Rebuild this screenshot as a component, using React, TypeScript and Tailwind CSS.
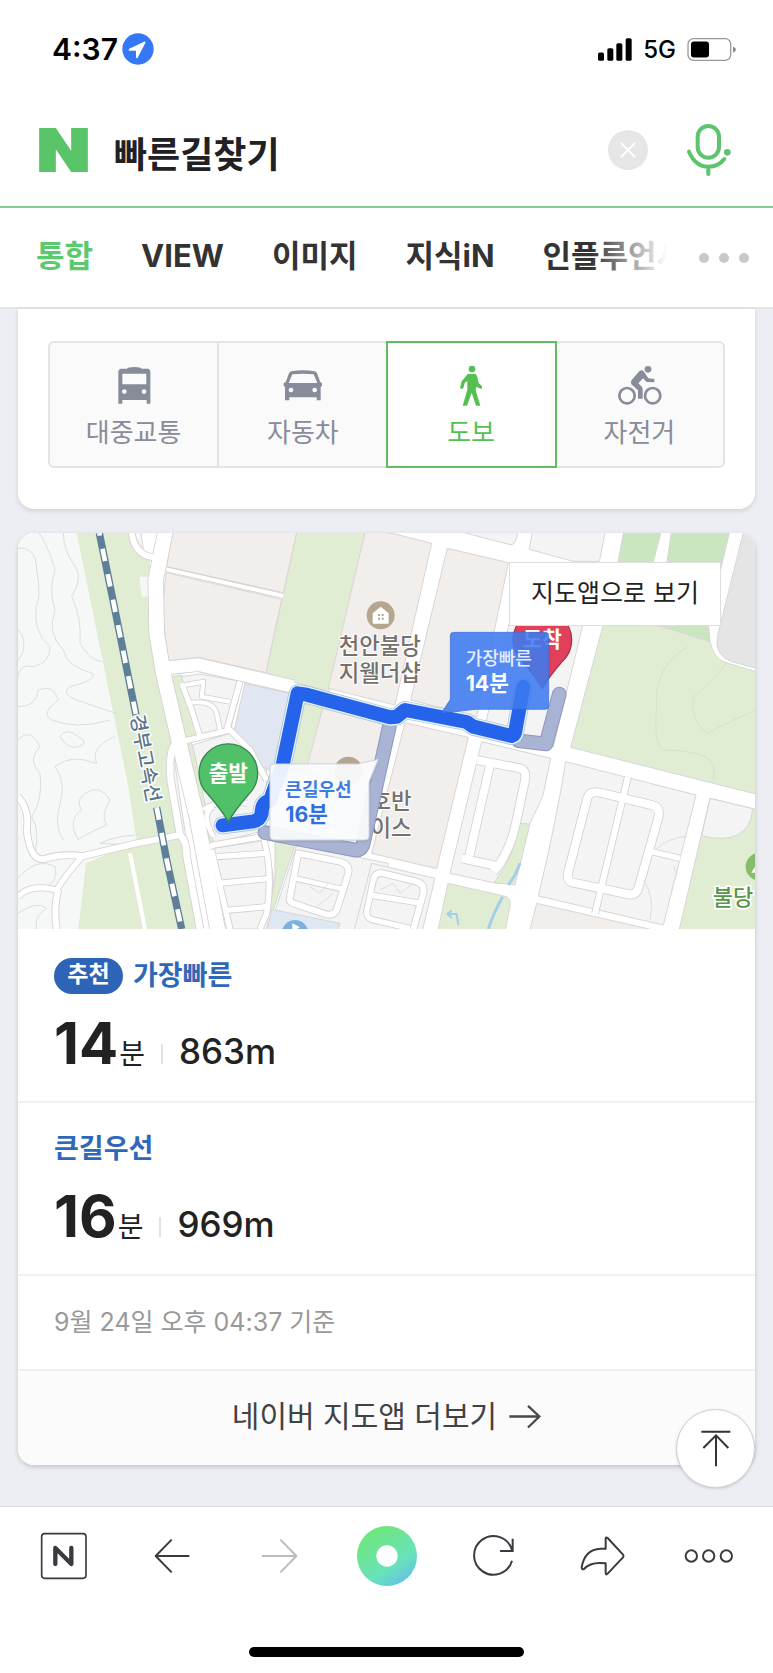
import React from "react";

const rail = "M298,39 L345,270 L408,585";
const railSouth = "M470,862 L500,1020 L545,1227";

const contours = [
  "M54,85 Q110,80 110,150 Q125,230 108,260 Q100,340 150,380 Q150,430 100,440 Q60,430 54,470",
  "M118,39 Q150,90 165,150 Q145,210 165,270 Q140,340 190,390 Q200,440 278,460 Q290,480 210,500 Q180,520 230,540 L348,580",
  "M190,39 Q190,90 225,140 Q250,170 215,230 Q245,290 240,370 Q270,420 305,425",
  "M54,560 Q110,560 115,510 Q160,490 175,540 Q120,580 155,600 Q230,630 330,600",
  "M180,650 Q200,620 235,650 Q270,670 235,680 Q205,690 180,650",
  "M54,660 Q90,620 120,680 Q80,720 120,760 Q130,840 95,890 Q120,930 105,1000",
  "M345,650 Q270,680 290,730 Q210,700 165,740 Q200,790 180,850 Q160,920 190,960",
  "M255,820 Q300,790 330,840 Q300,890 320,915 Q240,950 235,960 Q200,900 245,870 Q225,840 255,820",
  "M405,945 Q340,950 300,970 L395,975",
  "M54,330 Q80,350 68,400 L54,420",
  "M54,1075 Q110,1010 165,1040 Q180,1090 120,1110",
  "M54,1180 Q110,1140 140,1165 Q100,1190 110,1227",
  "M2065,380 Q1960,440 1970,560 Q1960,680 1990,690 Q2090,690 2130,720 Q2150,740 2140,780",
  "M2180,430 Q2120,500 2080,530 Q2070,600 2120,640 Q2180,610 2265,570",
];

const streets = [
  { d: "M395,39 Q405,105 460,112", w: 18 },
  { d: "M500,148 L850,228", w: 12 },
  { d: "M54,1130 Q90,1090 170,1110 Q200,1060 245,1012", w: 16 },
  { d: "M170,1227 Q160,1160 175,1110", w: 18 },
  { d: "M54,830 Q90,870 80,930 Q90,1020 130,1018 Q180,1000 250,1008 L400,972 L540,945", w: 18 },
  { d: "M525,670 Q505,700 512,780 L540,945 Q560,960 560,1010 L600,1227", w: 20 },
  { d: "M545,490 L575,570 L600,650", w: 15 },
  { d: "M555,495 L610,485 L605,530 L690,545", w: 12 },
  { d: "M570,548 Q640,540 650,580 L660,630", w: 12 },
  { d: "M720,485 L680,630", w: 16 },
  { d: "M545,665 L690,630 L750,690 L800,780", w: 16 },
  { d: "M610,870 Q640,840 740,850 M640,950 Q600,880 640,860", w: 14 },
  { d: "M610,990 L640,975 L790,950 Q820,1060 800,1180 L780,1227", w: 16 },
  { d: "M650,1010 L800,1000 M655,1090 L812,1075 M670,1172 L800,1160", w: 16 },
  { d: "M635,990 L690,1227", w: 16 },
  { d: "M895,1000 L1020,1025 Q1050,1035 1045,1060 L1010,1170 Q1000,1190 975,1182 L880,1150 Q865,1145 870,1130 Z", w: 18 },
  { d: "M885,1075 L1030,1108", w: 14 },
  { d: "M1120,1080 Q1125,1055 1150,1060 L1250,1085 Q1275,1092 1270,1120 L1240,1227", w: 18 },
  { d: "M1120,1080 L1100,1175 Q1100,1195 1120,1200 L1230,1225 M1110,1125 L1265,1150", w: 16 },
  { d: "M1430,720 L1560,745 Q1580,750 1575,780 L1550,900 Q1530,1000 1480,1055", w: 24 },
  { d: "M1470,735 L1405,1020 M1385,1015 L1500,1040", w: 24 },
  { d: "M1762,835 Q1768,812 1800,818 L1955,855 Q1982,862 1976,890 L1915,1105 Q1908,1128 1882,1122 L1720,1088 Q1698,1082 1705,1055 Z", w: 24 },
  { d: "M1884,770 L1785,1180", w: 18 },
  { d: "M1955,995 L2040,1015", w: 16 },
];

const stone = "fill-[#f1eeec]";
const pale = "fill-[#f4f4f4]";
const grass = "fill-[#e1edd2]";
const deepGrass = "fill-[#cae6c0]";

const blocks: { d: string; c: string }[] = [
  { d: "M40,20 H420 L600,1240 H40 Z", c: "fill-[#f6f7f7]" },
  { d: "M518,30 H892 L850,218 L500,140 Z", c: stone },
  { d: "M498,158 L845,238 L798,458 L595,412 L505,422 L487,280 Z", c: stone },
  { d: "M892,30 H1097 L985,520 L880,485 L798,458 Z", c: grass },
  { d: "M1097,30 L1185,42 L1295,70 L1185,555 L985,505 Z", c: stone },
  { d: "M1342,85 L1525,128 L1430,590 L1232,540 Z", c: stone },
  { d: "M1362,30 L1530,74 Q1549,78 1554,30 Z", c: pale },
  { d: "M1598,30 L1588,88 L1720,124 L1798,124 L1817,30 Z", c: pale },
  { d: "M1530,300 H1752 L1660,680 L1450,640 Z", c: pale },
  { d: "M1872,30 H1985 L1940,200 H1840 Z", c: deepGrass },
  { d: "M2015,30 H2190 L2150,200 H1990 Z", c: deepGrass },
  { d: "M1815,300 L1985,320 L2130,365 Q2140,420 2185,430 L2275,457 V824 L1712,682 L1800,350 Z", c: grass },
  { d: "M1960,310 H2125 L2130,364 Z", c: deepGrass },
  { d: "M2232,30 H2280 V448 L2195,425 Q2142,405 2152,350 Z", c: "fill-[#e5e5e5]" },
  { d: "M515,470 L545,465 L600,645 L553,655 Z", c: grass },
  { d: "M550,680 L575,670 L630,850 L640,970 L610,970 Z", c: grass },
  { d: "M545,470 L600,462 L728,485 L690,635 L600,655 Z", c: pale },
  { d: "M578,675 L690,640 L800,750 L800,930 L640,970 Z", c: pale },
  { d: "M735,490 L868,520 L825,760 L780,735 L700,640 Z", c: "fill-[#e0e7f2]" },
  { d: "M640,985 L800,960 L822,1080 L800,1227 H690 Z", c: pale },
  { d: "M825,965 L885,975 L820,1170 L805,1180 L825,1080 Z", c: grass },
  { d: "M905,550 L968,560 L925,760 H865 Z", c: grass },
  { d: "M968,565 L1148,612 L1090,950 L925,900 L925,725 Z", c: stone },
  { d: "M1215,608 L1405,652 L1310,1046 L1115,1000 Z", c: stone },
  { d: "M890,975 L1165,1030 L1120,1240 H990 L825,1175 Z", c: pale },
  { d: "M815,1168 L1020,1210 L1010,1240 H800 Z", c: "fill-[#dde8f3]" },
  { d: "M1115,1030 L1305,1075 L1265,1240 H1060 Z", c: pale },
  { d: "M1445,665 L1652,715 L1628,830 L1590,910 L1490,1090 L1350,1060 Z", c: pale },
  { d: "M1554,910 L1590,912 L1545,1095 L1482,1088 Q1550,1000 1554,910 Z", c: grass },
  { d: "M1344,1090 L1520,1130 Q1534,1140 1530,1160 L1514,1240 H1312 Z", c: grass },
  { d: "M1697,725 L2088,825 L1990,1215 L1615,1128 Q1670,900 1697,725 Z", c: pale },
  { d: "M1610,1150 L1960,1230 H1590 Z", c: stone },
  { d: "M2130,835 L2275,870 V1240 H2035 Z", c: grass },
  { d: "M2130,835 L2258,866 Q2250,980 2105,948 Z", c: pale },
];

const fastRoute =
  "M668,916 L760,904 Q780,900 785,880 Q785,845 810,842 L848,735 L893,520 L920,524 L1170,592 L1190,590 L1215,570 L1400,606 L1420,620 L1535,648 Q1543,646 1545,638 L1570,500";

function Pin({ x, y, label, tone }: { x: number; y: number; label: string; tone: string }) {
  return (
    <g transform={`translate(${x} ${y})`}>
      <path className={tone} strokeWidth="4" d="M0,145 Q-20,110 -62,62 A88,88 0 1 1 62,62 Q20,110 0,145 Z" />
      <text className="fill-white font-bold" fontSize="64" textAnchor="middle" y="22">{label}</text>
    </g>
  );
}

function RouteMap() {
  return (
    <svg viewBox="54 39 2211 1188" className="block h-auto w-full bg-white" role="img" aria-label="경로 지도">
      <g className="stroke-[#d8d6d5]" strokeWidth="3">
        {blocks.map((b) => <path key={b.d} d={b.d} className={b.c} />)}
      </g>
      <path className={grass} d="M230,39 H400 L450,118 L460,380 L485,500 L525,660 L510,700 L545,945 L600,1227 H235 L258,1030 L410,965 L385,800 Z" />
      <g fill="none" className="stroke-[#dddddd]" strokeWidth="3">
        {contours.slice(0, 12).map((d) => <path key={d} d={d} />)}
      </g>
      <g fill="none" className="stroke-[#d6e0c8]" strokeWidth="3">
        {contours.slice(12).map((d) => <path key={d} d={d} />)}
      </g>
      <path className="fill-[#f7f7f7]" d="M418,170 H445 V230 H425 Z" />
      <g fill="none" strokeLinejoin="round">
        {streets.map((s) => <path key={s.d} d={s.d} className="stroke-[#d3d1d0]" strokeWidth={s.w + 5} />)}
        <path className="stroke-[#d3d1d0]" strokeWidth="49" d="M497,30 L467,180 L470,340 L490,460 L545,700 L590,890 L655,1240" />
        <path className="stroke-[#d3d1d0]" strokeWidth="43" d="M497,445 L595,434 L880,500" />
        {streets.map((s) => <path key={s.d} d={s.d} className="stroke-white" strokeWidth={s.w} />)}
        <path className="stroke-white" strokeWidth="44" d="M497,30 L467,180 L470,340 L490,460 L545,700 L590,890 L655,1240" />
        <path className="stroke-white" strokeWidth="38" d="M485,445 L595,434 L880,500" />
        <path className="stroke-white" strokeWidth="12" d="M390,1000 L435,1227" />
      </g>
      <path className="fill-none stroke-[#dedede]" strokeWidth="3" d="M1965,990 Q2010,950 2060,950 M2020,1040 L2030,1060 L2015,1110 M1930,1080 Q1965,1130 1950,1200 M930,1100 L960,1120 L985,1090 M950,1160 L1000,1120 M1140,1110 L1180,1090 L1200,1120 L1240,1090 M650,700 L720,740" />
      <g fill="none" className="stroke-[#a5cdec]" strokeWidth="9">
        <path d="M1560,1030 Q1545,1070 1525,1095 M1508,1130 Q1480,1180 1465,1227" />
        <path strokeWidth="6" d="M1342,1182 L1370,1182 L1375,1215 M1355,1172 L1342,1182 L1356,1194" />
      </g>
      <g fill="none">
        {[rail, railSouth].map((d) => <path key={d} d={d} className="stroke-[#5d7f99]" strokeWidth="22" />)}
        <path d={rail} className="stroke-white" strokeWidth="14" strokeDasharray="38 40" strokeDashoffset="-48" />
        <path d={railSouth} className="stroke-white" strokeWidth="14" strokeDasharray="38 40" strokeDashoffset="-78" />
      </g>
      <text transform="translate(391 588) rotate(79)" fontSize="58" className="fill-[#5b738e] stroke-white font-medium" strokeWidth="8" paintOrder="stroke">경부고속선</text>

      <circle cx="1142" cy="286" r="42" className="fill-[#b5a78f]" />
      <path className="fill-white" d="M1142,260 L1166,280 V308 Q1166,311 1163,311 H1121 Q1118,311 1118,308 V280 Z" />
      <path className="fill-[#b5a78f]" d="M1134,282 h6 v6 h-6 z M1145,282 h6 v6 h-6 z M1134,293 h6 v6 h-6 z M1145,293 h6 v6 h-6 z" />
      <circle cx="1045" cy="752" r="42" className="fill-[#b5a78f]" />
      <g className="fill-[#76706c] stroke-white font-medium" fontSize="67" strokeWidth="6" paintOrder="stroke">
        <text x="1016" y="402">천안불당</text>
        <text x="1016" y="482">지웰더샵</text>
        <text x="1235" y="868" textAnchor="end">호반</text>
        <text x="1235" y="948" textAnchor="end">이스</text>
      </g>
      <circle cx="885" cy="1240" r="40" className="fill-[#7fafdf]" />
      <path className="fill-white" d="M877,1210 L900,1222 L877,1234 Z" />
      <circle cx="2279" cy="1040" r="42" className="fill-[#86bd6c]" />
      <path className="fill-white" d="M2279,1018 L2254,1058 H2290 Z" />
      <text x="2138" y="1156" fontSize="66" className="fill-[#5a9648] stroke-white font-medium" strokeWidth="10" paintOrder="stroke">불당</text>

      <g fill="none" strokeLinecap="round" strokeLinejoin="round">
        <g className="stroke-[#8d97bd]" strokeWidth="44">
          <path d="M795,938 L1065,990 Q1085,992 1090,970 L1168,620" />
          <path d="M1555,662 L1638,672 L1678,522" />
        </g>
        <g className="stroke-[#a9b3d4]" strokeWidth="38">
          <path d="M795,938 L1065,990 Q1085,992 1090,970 L1168,620" />
          <path d="M1555,662 L1638,672 L1678,522" />
        </g>
        <path className="stroke-[#a8bcd2]" strokeWidth="54" d={fastRoute} />
        <path className="stroke-[#e3f3ff]" strokeWidth="50" d={fastRoute} />
        <path className="stroke-[#2563ea]" strokeWidth="42" d={fastRoute} />
      </g>
      <Pin x={685} y={760} label="출발" tone="fill-[#50c168] stroke-[#37894f]" />
      <Pin x={1627} y={360} label="도착" tone="fill-[#e0405a] stroke-[#a8324a]" />

      <path className="fill-[#3c7af0] stroke-[#3468d8]" fillOpacity="0.88" strokeWidth="2" d="M1361,337 H1636 Q1646,337 1646,347 V558 Q1646,568 1636,568 H1425 L1324,580 L1351,538 V347 Q1351,337 1361,337 Z" />
      <text x="1397" y="436" fontSize="54" className="fill-[#e6efff] font-medium">가장빠른</text>
      <text x="1397" y="514" fontSize="64" className="fill-white font-bold">14분</text>

      <path className="fill-[#fcfdff] stroke-[#d0d5e0] drop-shadow-md" fillOpacity="0.92" strokeWidth="3" d="M822,732 H1075 L1135,718 L1107,785 V948 Q1107,960 1095,960 H822 Q810,960 810,948 V744 Q810,732 822,732 Z" />
      <text x="856" y="828" fontSize="54" className="fill-[#3c7ce0] font-bold">큰길우선</text>
      <text x="856" y="907" fontSize="64" className="fill-[#2f6fe0] font-bold">16분</text>
    </svg>
  );
}

const modes = [
  {
    label: "대중교통",
    icon: (
      <svg viewBox="332 152 144 144" className="size-12 fill-current" aria-hidden="true">
        <path fillRule="evenodd" d="M383,175 Q385,170 405,170 Q425,170 427,175 H446 Q453,176 453,184 V280 H442 V269 H369 V280 H357 V184 Q357,176 364,175 Z M369,190 V222 H441 V190 Z M375,237 a7,7 0 1 0 .1,0 Z M434,237 a7,7 0 1 0 .1,0 Z" />
      </svg>
    ),
  },
  {
    label: "자동차",
    icon: (
      <svg viewBox="838 152 144 144" className="size-12 fill-current" aria-hidden="true">
        <path fillRule="evenodd" d="M875,183 Q910,176 945,183 Q950,184 952,189 L962,216 L967,218 V226 L963,230 V270 H951 V261 H869 V270 H856 V230 L852,226 V218 L858,216 L868,189 Q870,184 875,183 Z M878,192 L867,218 H953 L942,192 Q910,188 878,192 Z M874,232 a7,7 0 1 0 .1,0 Z M945,232 a7,7 0 1 0 .1,0 Z" />
      </svg>
    ),
  },
  {
    label: "도보",
    active: true,
    icon: (
      <svg viewBox="194 152 144 144" className="size-12 fill-current" aria-hidden="true">
        <circle cx="269" cy="176" r="10" />
        <path d="M256,191 H278 Q282,191 284,196 L289,218 L299,228 Q301,233 296,236 L282,229 L280,240 L294,286 H281 L268,247 L254,286 H241 L255,238 V212 L247,218 L243,234 Q238,238 233,232 L238,213 Z" />
      </svg>
    ),
  },
  {
    label: "자전거",
    icon: (
      <svg viewBox="697 152 144 144" className="size-12 fill-current" aria-hidden="true">
        <circle cx="796" cy="177" r="10" />
        <g fill="none" stroke="currentColor" strokeWidth="8">
          <circle cx="733" cy="256" r="23" />
          <circle cx="810" cy="256" r="23" />
        </g>
        <path d="M770,183 Q776,177 783,183 L797,204 L815,206 V216 L792,215 L781,204 L767,219 L778,230 Q780,233 780,240 V265 H766 V240 L746,222 Q742,216 747,209 Z" />
      </svg>
    ),
  },
];

const tabs = ["통합", "VIEW", "이미지", "지식iN", "인플루언서"];

const routes = [
  { name: "가장빠른", minutes: "14", distance: "863m", recommended: true },
  { name: "큰길우선", minutes: "16", distance: "969m", recommended: false },
];

const navItem = "size-16 shrink-0";
const navIcon = "size-16 fill-none stroke-[#3a3a40]";

export default function App() {
  return (
    <div className="flex min-h-screen flex-col bg-[#eceef3] font-['Inter','Noto_Sans_CJK_KR',sans-serif] text-[#222]">
      <div className="bg-white">
        <div className="flex h-[94px] items-center justify-between pt-1 pr-9 pl-[52px] text-black">
          <div className="flex items-center gap-1">
            <span className="text-[30px] leading-9 font-semibold">4:37</span>
            <svg viewBox="368 98 96 96" className="size-8" aria-hidden="true">
              <circle cx="416" cy="146" r="47" className="fill-[#3478f6]" />
              <path className="fill-white" d="M434,124 Q440,122 438,128 L415,172 Q411,177 410,170 V151 H391 Q385,149 390,145 Z" />
            </svg>
          </div>
          <div className="flex items-center gap-[11px]">
            <svg viewBox="0 0 102 68" className="h-[23px] w-[34px]" aria-hidden="true">
              <rect x="0" y="43" width="18" height="25" rx="5" />
              <rect x="28" y="30" width="18" height="38" rx="5" />
              <rect x="55" y="15" width="18" height="53" rx="5" />
              <rect x="83" y="0" width="18" height="68" rx="5" />
            </svg>
            <span className="pt-0.5 text-2xl leading-8 font-medium">5G</span>
            <svg viewBox="0 0 150 70" className="h-[23px] w-[50px]" aria-hidden="true">
              <rect x="2" y="2" width="130" height="66" rx="17" className="fill-white stroke-[#999]" strokeWidth="4" />
              <rect x="11" y="11" width="55" height="48" rx="9" />
              <path d="M139,26 Q148,30 148,35 Q148,41 139,45 Z" className="fill-[#888]" />
            </svg>
          </div>
        </div>

        <header className="flex h-[114px] items-center border-b-2 border-[#7dd393] pr-8 pl-[39px]">
          <a href="#home" aria-label="네이버" className="shrink-0">
            <svg viewBox="118 386 146 132" className="h-11 w-[49px] fill-[#5ac568]" aria-hidden="true">
              <path d="M118,386 H168 L214,454 V386 H264 V518 H214 L168,450 V518 H118 Z" />
            </svg>
          </a>
          <input aria-label="검색어" defaultValue="빠른길찾기" className="ml-[26px] h-14 min-w-0 flex-1 bg-transparent pt-1 text-[36px] leading-[52px] font-bold text-[#212125] outline-none" />
          <button aria-label="지우기" className="flex size-10 shrink-0 items-center justify-center rounded-full bg-[#e6e6e6]">
            <svg viewBox="0 0 20 20" className="size-5 stroke-white" strokeWidth="2" aria-hidden="true"><path d="M3,3 L17,17 M17,3 L3,17" /></svg>
          </button>
          <button aria-label="음성 검색" className="ml-[29px] size-16 shrink-0">
            <svg viewBox="882 354 192 192" className="size-16 fill-none stroke-[#5cc46c]" strokeWidth="12" strokeLinecap="round" aria-hidden="true">
              <rect x="944" y="378" width="64" height="95" rx="32" />
              <path d="M918,455 Q937,500 976,500 Q1006,500 1024,477 M976,500 V522" />
              <circle cx="1033" cy="457" r="10" className="fill-[#5cc46c] stroke-none" />
            </svg>
          </button>
        </header>

        <nav className="flex h-[101px] items-center border-b-2 border-[#e3e4e7] pr-6 pl-9">
          <div className="relative flex min-w-0 flex-1 overflow-hidden">
            <div className="flex gap-12 pb-1">
              {tabs.map((t, i) => (
                <a key={t} href="#tab" className={i === 0 ? "text-[31px] leading-10 font-bold whitespace-nowrap text-[#5cc96e]" : "text-[31px] leading-10 font-bold whitespace-nowrap text-[#333]"}>{t}</a>
              ))}
            </div>
            <div className="pointer-events-none absolute inset-y-0 right-0 w-20 bg-linear-to-r from-transparent to-white to-95%" />
          </div>
          <button aria-label="더보기" className="ml-7 flex h-10 shrink-0 items-center gap-[10px]">
            <span className="size-[10px] rounded-full bg-[#c8c8cc]" />
            <span className="size-[10px] rounded-full bg-[#c8c8cc]" />
            <span className="size-[10px] rounded-full bg-[#c8c8cc]" />
          </button>
        </nav>
      </div>

      <main className="relative flex-1 px-[18px] pb-10">
        <section className="rounded-b-2xl bg-white px-[30px] pt-8 pb-[41px] shadow-[0_2px_5px_rgba(0,0,0,0.12)]">
          <div className="flex">
            {modes.map((m, i) => (
              <button
                key={m.label}
                aria-pressed={!!m.active}
                className={
                  "flex h-[127px] flex-1 flex-col items-center gap-2 border-2 pt-[18px] text-[26px] leading-8 " +
                  (m.active
                    ? "z-10 -mx-px border-[#62bd60] bg-white text-[#55c052]"
                    : "border-[#e3e4e9] bg-[#fafafb] text-[#888b99] ") +
                  (i === 0 ? " rounded-l-md" : "") +
                  (i === 1 ? " border-x-0" : "") +
                  (i === 3 ? " rounded-r-md border-l-0" : "")
                }
              >
                {m.icon}
                <span>{m.label}</span>
              </button>
            ))}
          </div>
        </section>

        <section className="mt-6 overflow-hidden rounded-2xl bg-white shadow-[0_2px_5px_rgba(0,0,0,0.18)]">
          <div className="relative">
            <RouteMap />
            <a href="#map" className="absolute top-[29px] right-[34px] flex h-16 w-[212px] items-center justify-center border border-[#dedede] bg-white text-[25px] whitespace-nowrap text-[#222]">지도앱으로 보기</a>
          </div>

          <div className="pt-px">
            {routes.map((r) => (
              <a key={r.name} href="#route" className="block h-[173px] border-b-2 border-[#f1f1f3] pt-7 pl-9">
                <div className="flex h-9 items-center gap-[10px]">
                  {r.recommended && <span className="flex h-9 w-[69px] items-center justify-center rounded-full bg-[#2e64b8] pb-1 text-[23px] leading-8 font-bold text-white">추천</span>}
                  <h2 className="pb-px text-[27px] leading-8 font-bold text-[#3068b8]">{r.name}</h2>
                </div>
                <div className="mt-5 flex items-baseline leading-[58px]">
                  <strong className="text-[58px] font-bold">{r.minutes}</strong>
                  <span className="ml-px text-[28px]">분</span>
                  <span className="mx-4 h-5 w-0.5 bg-[#e2e2e4]" />
                  <span className="text-[35px] font-medium">{r.distance}</span>
                </div>
              </a>
            ))}
            <p className="flex h-[95px] items-center border-b-2 border-[#f0f0f2] pl-9 text-[25px] text-[#999]">9월 24일 오후 04:37 기준</p>
          </div>
          <a href="#more" className="flex h-[94px] items-center justify-center gap-3 bg-[#fbfbfc] pb-1 text-[30px] text-[#424242]">
            네이버 지도앱 더보기
            <svg viewBox="374 158 96 74" className="h-[25px] w-8 fill-none stroke-[#4a4a4a]" strokeWidth="7" aria-hidden="true">
              <path d="M375,195 H465 M431,163 L465,195 L431,228" />
            </svg>
          </a>
        </section>

        <button aria-label="맨 위로" className="absolute right-[18px] bottom-[18px] flex size-[79px] items-center justify-center rounded-full border border-[#cfcfd4] bg-white shadow-[0_1px_3px_rgba(0,0,0,0.15)]">
          <svg viewBox="938 235 120 120" className="size-10 fill-none stroke-[#333]" strokeWidth="6" aria-hidden="true">
            <path d="M954,243 H1041 M998,347 V254 M960,292 L998,254 L1035,292" />
          </svg>
        </button>
      </main>

      <footer className="border-t border-[#dcdde2] bg-white pb-4">
        <div className="flex items-center justify-between px-8 pt-[17px]">
          <button aria-label="네이버 홈" className={navItem}>
            <svg viewBox="96 522 192 192" className={navIcon} strokeWidth="5" aria-hidden="true">
              <rect x="125" y="551" width="133" height="134" rx="9" />
              <path strokeWidth="13" strokeLinecap="round" strokeLinejoin="round" d="M166,642 V594 L214,642 V594" />
            </svg>
          </button>
          <button aria-label="뒤로" className={navItem}>
            <svg viewBox="421 522 192 192" className={navIcon} strokeWidth="6" strokeLinejoin="round" aria-hidden="true"><path d="M569,618 H468 M516,569 L468,618 L516,667" /></svg>
          </button>
          <button aria-label="앞으로" className={navItem}>
            <svg viewBox="741 522 192 192" className="size-16 fill-none stroke-[#bcbcbe]" strokeWidth="6" strokeLinejoin="round" aria-hidden="true"><path d="M786,618 H889 M841,569 L889,618 L841,667" /></svg>
          </button>
          <button aria-label="그린닷" className={navItem}>
            <svg viewBox="0 0 192 192" className="size-16" aria-hidden="true">
              <defs>
                <linearGradient id="dot" x1="0.25" y1="0.05" x2="0.85" y2="0.95">
                  <stop offset="0" stopColor="#6fe67a" />
                  <stop offset="0.65" stopColor="#69e2ba" />
                  <stop offset="1" stopColor="#62bfe6" />
                </linearGradient>
              </defs>
              <circle cx="96" cy="96" r="90" fill="url(#dot)" />
              <circle cx="96" cy="96" r="32" className="fill-white" />
            </svg>
          </button>
          <button aria-label="새로고침" className={navItem}>
            <svg viewBox="237 522 192 192" className={navIcon} strokeWidth="6" aria-hidden="true">
              <path d="M387,632 A58,58 0 1 1 387,600 M389,566 V603 H351" />
            </svg>
          </button>
          <button aria-label="공유" className={navItem}>
            <svg viewBox="560 522 192 192" className={navIcon} strokeWidth="6" strokeLinejoin="round" aria-hidden="true">
              <path d="M667,565 Q668,560 673,564 L719,614 Q722,618 719,622 L673,671 Q668,676 667,670 V640 Q622,634 602,657 Q595,660 595,652 Q604,598 652,596 H667 Z" />
            </svg>
          </button>
          <button aria-label="메뉴" className={navItem}>
            <svg viewBox="882 522 192 192" className={navIcon} strokeWidth="6" aria-hidden="true">
              <circle cx="925" cy="618" r="17" /><circle cx="977" cy="618" r="17" /><circle cx="1030" cy="618" r="17" />
            </svg>
          </button>
        </div>
        <div className="mx-auto mt-[59px] h-[10px] w-[275px] rounded-full bg-black" />
      </footer>
    </div>
  );
}
